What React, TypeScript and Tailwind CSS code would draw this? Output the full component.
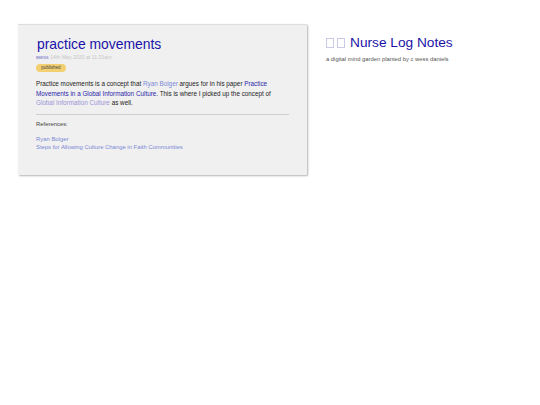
export default function App() {
  const link = "text-[#7b88d6]";
  const dark = "text-[#2a1fa8]";
  return (
    <div className="w-[540px] h-[405px] bg-white flex items-start pt-[24px] pl-[18px] font-['Liberation_Sans',sans-serif] overflow-hidden">
      <div className="w-[289px] h-[151px] shrink-0 bg-[#f0f0f0] rounded-[1px] border-t border-[#dddddd] shadow-[1px_1px_2px_rgba(0,0,0,0.3)] pl-[18px] pr-[18px] pt-[10px]">
        <h1 className="text-[13.9px] leading-[18px] text-[#1a12a8] pl-[1px]">practice movements</h1>
        <div className="text-[5.2px] leading-[6px] mt-[1px] text-[#c8c8c8]">
          <span className="text-[#8f8fd0] font-bold">wess</span> 14th May 2020 at 11:31am
        </div>
        <div className="mt-[4px] w-[30px] h-[8px] rounded-full bg-[#f2cf70] text-[4.5px] leading-[8px] text-center text-[#444444]">published</div>
        <p className="mt-[7px] text-[6.33px] leading-[9.5px] text-[#222222]">
          Practice movements is a concept that <span className={link}>Ryan Bolger</span> argues for in his paper <span className={dark}>Practice Movements in a Global Information Culture</span>. This is where I picked up the concept of <span className="text-[#9b94d8]">Global Information Culture</span> as well.
        </p>
        <hr className="mt-[6px] border-[#cfcfcf]" />
        <p className="mt-[5px] text-[5.9px] leading-[8px] text-[#444444]">References:</p>
        <div className={`mt-[7px] text-[5.9px] leading-[8.4px] ${link}`}>
          <div>Ryan Bolger</div>
          <div>Steps for Allowing Culture Change in Faith Communities</div>
        </div>
      </div>
      <div className="ml-[19px] pt-[10px]">
        <div className="flex items-center text-[13.7px] leading-[18px] text-[#1a12a8]">
          <span className="w-[8px] h-[10px] border border-[#c9c9e8]" />
          <span className="w-[8px] h-[10px] border border-[#c9c9e8] ml-[3px]" />
          <span className="ml-[5px]">Nurse Log Notes</span>
        </div>
        <p className="mt-[4px] text-[5.85px] leading-[7px] text-[#555555]">a digital mind garden planted by c wess daniels</p>
      </div>
    </div>
  );
}
